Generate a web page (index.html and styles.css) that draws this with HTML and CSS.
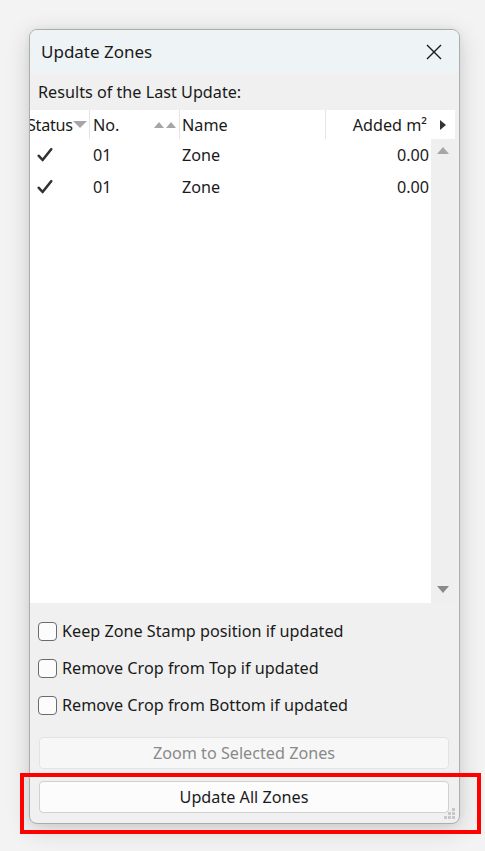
FILE: index.html
```html
<!DOCTYPE html>
<html>
<head>
<meta charset="utf-8">
<link rel="stylesheet" href="styles.css">
</head>
<body>
<div class="window">
  <div class="titlebar">
    <span class="title">Update Zones</span>
    <svg class="close" width="18" height="18" viewBox="0 0 18 18"><path d="M2 2 L16 16 M16 2 L2 16" stroke="#1a1a1a" stroke-width="1.4" fill="none"/></svg>
  </div>
  <div class="results-label">Results of the Last Update:</div>
  <div class="table">
    <div class="thead">
      <div class="th th-status"><span class="clip">Status</span><svg class="tri" width="14" height="8" viewBox="0 0 14 8"><path d="M0 0 H14 L7 7 Z" fill="#a6a6a6"/></svg></div>
      <div class="th th-no"><span>No.</span><svg class="tri2" width="24" height="8" viewBox="0 0 24 8"><path d="M0 7 L5 1 L10 7 Z M12 7 L17 1 L22 7 Z" fill="#a6a6a6"/></svg></div>
      <div class="th th-name">Name</div>
      <div class="th th-added">Added m²</div>
      <div class="th th-arrow"><svg width="8" height="12" viewBox="0 0 8 12"><path d="M1 1 L7 6 L1 11 Z" fill="#333"/></svg></div>
    </div>
    <div class="tbody">
      <div class="rows">
        <div class="row">
          <div class="td td-status"><svg width="16" height="16" viewBox="0 0 16 16"><path d="M1.8 8.8 L5.6 13 L14.2 2.2" stroke="#333" stroke-width="2.6" fill="none" stroke-linecap="round" stroke-linejoin="round"/></svg></div>
          <div class="td td-no">01</div>
          <div class="td td-name">Zone</div>
          <div class="td td-added">0.00</div>
        </div>
        <div class="row">
          <div class="td td-status"><svg width="16" height="16" viewBox="0 0 16 16"><path d="M1.8 8.8 L5.6 13 L14.2 2.2" stroke="#333" stroke-width="2.6" fill="none" stroke-linecap="round" stroke-linejoin="round"/></svg></div>
          <div class="td td-no">01</div>
          <div class="td td-name">Zone</div>
          <div class="td td-added">0.00</div>
        </div>
      </div>
      <div class="vscroll">
        <svg width="12" height="8" viewBox="0 0 12 8"><path d="M0 7 L6 0 L12 7 Z" fill="#a6a6a6"/></svg>
        <svg width="12" height="8" viewBox="0 0 12 8"><path d="M0 0 L12 0 L6 7 Z" fill="#8a8a8a"/></svg>
      </div>
    </div>
  </div>
  <div class="options">
    <label class="opt"><span class="box"></span>Keep Zone Stamp position if updated</label>
    <label class="opt"><span class="box"></span>Remove Crop from Top if updated</label>
    <label class="opt"><span class="box"></span>Remove Crop from Bottom if updated</label>
  </div>
  <div class="buttons">
    <div class="btn disabled">Zoom to Selected Zones</div>
    <div class="btn">Update All Zones</div>
  </div>
  <svg class="grip" width="12" height="12" viewBox="0 0 12 12"><g fill="#c8c8c8"><rect x="8" y="0" width="3" height="3"/><rect x="4" y="4" width="3" height="3"/><rect x="8" y="4" width="3" height="3"/><rect x="0" y="8" width="3" height="3"/><rect x="4" y="8" width="3" height="3"/><rect x="8" y="8" width="3" height="3"/></g></svg>
</div>
<div class="highlight"></div>
</body>
</html>
```
FILE: styles.css
```css
* { box-sizing: border-box; }
html, body { margin: 0; padding: 0; }
body {
  background: #f3f3f3;
  width: 485px;
  height: 851px;
  overflow: hidden;
  padding: 29px 0 0 29px;
  font-family: "Noto Sans", "Open Sans", sans-serif;
  font-size: 16.2px;
  color: #1a1a1a;
  position: relative;
}
.window {
  width: 431px;
  height: 795px;
  background: #f0f0f0;
  border: 1px solid #adadad;
  border-radius: 8px;
  box-shadow: 0 6px 24px rgba(0,0,0,0.16), 0 0 6px rgba(0,0,0,0.06);
  display: flex;
  flex-direction: column;
  overflow: hidden;
  position: relative;
}
.titlebar {
  height: 43px;
  background: #eef3f6;
  display: flex;
  align-items: center;
  justify-content: space-between;
  padding: 0 16px 0 11px;
  flex: none;
}
.title { font-size: 17px; color: #1a1a1a; }
.close { display: block; }
.results-label {
  height: 37px;
  display: flex;
  align-items: center;
  padding-left: 8px;
  flex: none;
}
.table {
  width: 425px;
  height: 493px;
  background: #fff;
  display: flex;
  flex-direction: column;
  flex: none;
}
.thead {
  height: 29px;
  display: flex;
  align-items: stretch;
  flex: none;
}
.th {
  display: flex;
  align-items: center;
  border-right: 1px solid #e5e5e5;
  white-space: nowrap;
}
.th-status { width: 60px; overflow: hidden; position: relative; }
.th-status .clip { margin-left: -3px; letter-spacing: -0.3px; }
.th-status .tri { margin-left: 0; flex: none; }
.th-no { width: 90px; padding-left: 3px; justify-content: space-between; padding-right: 1px; }
.th-name { width: 146px; padding-left: 2px; }
.th-added { width: 105px; justify-content: flex-end; padding-right: 4px; border-right: none; }
.th-arrow { width: 24px; justify-content: center; border-right: none; }
.tbody {
  flex: 1;
  display: flex;
}
.rows { flex: 1; }
.row {
  height: 32px;
  display: flex;
  align-items: center;
}
.td { white-space: nowrap; }
.td-status { width: 60px; padding-left: 7px; display: flex; align-items: center; }
.td-no { width: 90px; padding-left: 3px; }
.td-name { width: 146px; padding-left: 2px; }
.td-added { width: 105px; text-align: right; padding-right: 2px; }
.vscroll {
  width: 24px;
  background: #efefef;
  display: flex;
  flex-direction: column;
  justify-content: space-between;
  align-items: center;
  padding: 8px 0 9px;
}
.vscroll svg { display: block; }
.options {
  padding: 17px 0 0 8px;
  display: flex;
  flex-direction: column;
  gap: 15px;
  flex: none;
}
.opt {
  display: flex;
  align-items: center;
  height: 22px;
  gap: 5px;
}
.box {
  width: 19px;
  height: 19px;
  border: 1px solid #6b6b6b;
  border-radius: 4px;
  background: #fcfcfc;
  flex: none;
}
.buttons {
  padding: 21px 0 0 9px;
  display: flex;
  flex-direction: column;
  gap: 12px;
}
.btn {
  width: 410px;
  height: 32px;
  border: 1px solid #d0d0d0;
  border-radius: 4px;
  background: #fcfcfc;
  display: flex;
  align-items: center;
  justify-content: center;
}
.btn.disabled {
  color: #8a8a8a;
  background: #f7f7f7;
  border-color: #e3e3e3;
}
.grip { position: absolute; right: 3px; bottom: 3px; }
.highlight {
  position: absolute;
  left: 20px;
  top: 773px;
  width: 461px;
  height: 61px;
  border: 4px solid #ff0000;
}
```
